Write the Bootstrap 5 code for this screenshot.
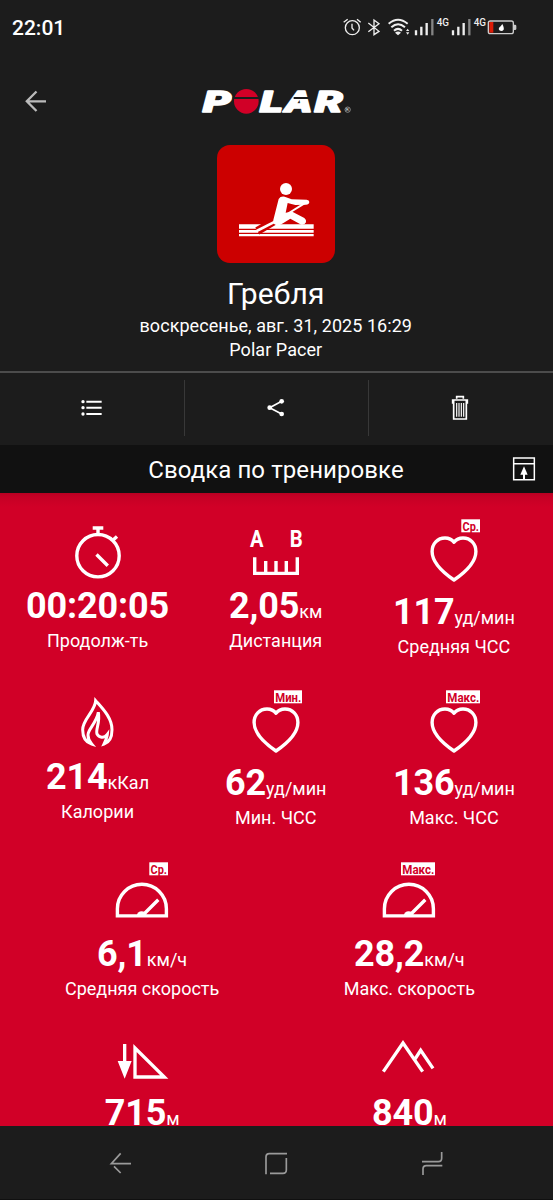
<!DOCTYPE html>
<html lang="ru">
<head>
<meta charset="utf-8">
<meta name="viewport" content="width=device-width, initial-scale=1">
<title>Polar – Гребля</title>
<link href="https://cdn.jsdelivr.net/npm/bootstrap@5.3.0/dist/css/bootstrap.min.css" rel="stylesheet">
<style>
  body { background: #1c1c1c; color: #fff; font-family: Roboto, "Noto Sans", sans-serif; }
  svg { display: block; overflow: visible; }
  .screen { width: 553px; height: 1200px; overflow: hidden; }
  .statusbar { height: 56px; padding-left: 12px; }
  .clock { font-size: 21px; font-weight: 500; line-height: 57px; }
  .appbar { height: 88.500px; }
  .side { width: 190px; padding-left: 24px; }
  .sport-tile { width: 118px; height: 118.4px; border-radius: 13px; background: #c00; }
  .sport-name { font-size: 30px; line-height: 36px; margin-top: 13.600px; letter-spacing: .1px; }
  .sport-meta { font-size: 18px; line-height: 24px; letter-spacing: .05px; position: static; }
  .sport-name + .sport-meta { margin-top: 1.500px; }
  .session { height: 228.500px; border-bottom: 2px solid #4c4c4c; padding-right: 1.500px; }
  .actions { height: 72px; padding: 7px 1px 9px 0; }
  .actions > div + div { border-left: 1px solid #383838; }
  .section-title { height: 48px; background: #111; font-size: 24px; line-height: 50px; letter-spacing: .08px; padding-right: 1px; }
  .title-icon { right: 17px; }
  .summary { height: 633px; padding: 25px 10px 0 8.500px; background: linear-gradient(#b80022, #c60025 4px, #d10027 14px, #d10027); }
  .metrics { height: 171.3px; --bs-gutter-x: 0; }
  .metric-value { font-size: 36px; line-height: 42px; height: 42px; font-weight: 700; white-space: nowrap; letter-spacing: -.15px; padding-top: .6px; }
  .unit { font-size: 18px; font-weight: 400; line-height: 1; letter-spacing: 0; }
  .metric-label { font-size: 18px; line-height: 21px; margin-top: 3.5px; }
  .line { fill: none; stroke: #fff; stroke-width: 3.4; }
  .tagtext { font: 700 13px Roboto, sans-serif; fill: #d10027; }
  .sysnav { height: 74px; border-bottom: 1px solid #101010; }
</style>
</head>
<body>
<svg width="0" height="0" class="position-absolute" aria-hidden="true">
  <defs>
    <path id="heart" class="line" d="M0 24.3C-2.5 21-5.5 20-9 20C-16.500 20-21.900 26-21.900 33.500C-21.900 45-11 54.500 0 62C11 54.500 21.900 45 21.900 33.500C21.900 26 16.500 20 9 20C5.500 20 2.500 21 0 24.300Z" stroke-linejoin="round"/>
    <g id="gauge"><path class="line" d="M-24.600 54.900V47.800A24.500 24.500 0 0 1 24.400 47.800V54.900Z M2 53L16.300 38.800"/><path fill="#fff" d="M-5.200 55a4.800 4.800 0 0 1 9.600 0z"/></g>
  </defs>
</svg>
<main class="screen d-flex flex-column">
  <header class="statusbar d-flex justify-content-between flex-shrink-0">
    <span class="clock">22:01</span>
    <svg width="223" height="60" viewBox="0 0 669 180" fill="none" stroke="#eee">
      <circle cx="67" cy="83" r="21" stroke-width="4"/><path d="M66 71V84L72 91M41 67l12-9M81 58l11 9" stroke-width="4"/>
      <path d="M115 69L147 94L132 104V60L147 71L115 95" stroke-width="4"/>
      <path d="M176 71Q204 47 233 71M184 82Q204 64 225 82M192 92Q204 81 216 92" stroke-width="6"/><path d="M195 98Q204 91 213 98L204 106Z" fill="#eee" stroke="none"/>
      <path d="M228 93l5-7 5 7zM228 97l5 7 5-7z" fill="#eee" stroke="none"/>
      <g id="bars" stroke-width="7"><path d="M258 91v15M274 80v26M290 69v37"/><path d="M307 57v49" stroke="#858585"/></g>
      <use href="#bars" x="111"/>
      <g fill="#eee" stroke="none" font-family="Roboto, sans-serif" font-weight="500" font-size="33"><text x="320" y="78" textLength="37" lengthAdjust="spacingAndGlyphs">4G</text><text x="431" y="78" textLength="37" lengthAdjust="spacingAndGlyphs">4G</text></g>
      <rect x="475" y="63" width="75" height="38" rx="6" stroke="#ccc" stroke-width="4"/><path d="M478 66h12v32h-12z" fill="#dc1c06" stroke="none"/><path d="M552 74h3q4 0 4 4v8q0 4-4 4h-3z" fill="#ccc" stroke="none"/>
      <path d="M517 72q6 12 4 17q-5 7-13 2q-5-5 4-12z" fill="#fff" stroke="none"/>
    </svg>
  </header>

  <nav class="appbar d-flex flex-shrink-0">
    <div class="side"><svg width="24" height="88" viewBox="0 0 24 88" fill="none" stroke="#bbb" stroke-width="2.300"><path d="M22 45.300H3M12.500 35.500L2.800 45.300L12.500 55"/></svg></div>
    <svg width="180" height="88" viewBox="0 -57 540 264" fill="#fff" font-family="Roboto, sans-serif" font-weight="900" font-style="italic">
      <g stroke="#fff" stroke-width="5" stroke-linejoin="round" font-size="88"><text x="39" y="110" textLength="84" lengthAdjust="spacingAndGlyphs">P</text><text x="210" y="110" textLength="68" lengthAdjust="spacingAndGlyphs">L</text><text x="286" y="110" textLength="80" lengthAdjust="spacingAndGlyphs">A</text><text x="374" y="110" textLength="84" lengthAdjust="spacingAndGlyphs">R</text></g>
      <circle cx="169" cy="79" r="37" fill="#d10027"/><path d="M128 69H209M311 69H360" stroke="#1c1c1c" stroke-width="6"/>
      <circle cx="473" cy="104" r="8" fill="none" stroke="#bbb" stroke-width="2"/><text x="468" y="109" font-size="13" font-weight="400" font-style="normal">R</text>
    </svg>
  </nav>

  <section class="session d-flex flex-column align-items-center flex-shrink-0 text-center">
    <div class="sport-tile">
      <svg width="118" height="118" viewBox="51 28 354 354" fill="#fff">
        <path d="M117 266H341V279H117ZM117 283H341V291H117ZM117 295H341V302H117Z"/>
        <path d="M223 256L172 286" stroke="#c00" stroke-width="24"/>
        <circle cx="258" cy="160" r="18"/>
        <path d="M236 190Q241 181 254 183L275 191L320 192Q328 193 328 199Q327 207 318 207L286 208L263 202L257 231L277 228L313 247Q320 252 318 260Q314 269 304 267L271 249L244 266Q236 271 226 267Q218 264 220 253Z"/>
        <path d="M317 201L257 238" stroke="#fff" stroke-width="6"/><path d="M225 258L170 286" stroke="#fff" stroke-width="8"/>
      </svg>
    </div>
    <div class="sport-name">Гребля</div>
    <div class="sport-meta">воскресенье, авг. 31, 2025 16:29</div>
    <div class="sport-meta">Polar Pacer</div>
  </section>

  <section class="actions d-flex flex-shrink-0">
    <div class="flex-fill d-flex justify-content-center w-100">
      <svg width="22" height="56" viewBox="228 30 66 168" stroke="#fff"><path d="M244 95H290M244 113H290M244 132H290" stroke-width="6"/><g stroke="none" fill="#fff"><circle cx="234" cy="95" r="5"/><circle cx="234" cy="113" r="5"/><circle cx="234" cy="132" r="5"/></g></svg>
    </div>
    <div class="flex-fill d-flex justify-content-center w-100">
      <svg width="20" height="56" viewBox="755 30 60 168" fill="#fff"><path d="M802 94L766 113L802 132" fill="none" stroke="#fff" stroke-width="5"/><circle cx="802" cy="94" r="7"/><circle cx="766" cy="113" r="7"/><circle cx="802" cy="132" r="7"/></svg>
    </div>
    <div class="flex-fill d-flex justify-content-center w-100">
      <svg width="18" height="56" viewBox="1281 30 54 168" fill="none" stroke="#fff" stroke-width="5"><path d="M1298 86V80H1318V86M1286 101V90H1330V101M1289 92V147H1327V92"/><path d="M1298 99V140M1305 99V140M1312 99V140M1319 99V140" stroke-width="3.500"/></svg>
    </div>
  </section>

  <div class="section-title position-relative flex-shrink-0 text-center">Сводка по тренировке
    <svg class="title-icon position-absolute top-0" width="24" height="48" viewBox="1450 225 72 144" fill="none" stroke="#fff" stroke-width="4.500"><path d="M1455 264H1517V329H1455ZM1455 281H1517"/><path d="M1486 328V308" stroke-width="6"/><path d="M1486 289L1497 314H1475Z" fill="#fff" stroke="none"/></svg>
  </div>

  <section class="summary flex-shrink-0 overflow-hidden text-center">
    <div class="metrics row">
      <div class="col-4">
        <svg class="mx-auto" width="80" height="66" viewBox="-40 0 80 66"><circle class="line" cx="0" cy="37.700" r="21.200"/><path class="line" d="M-5.300 10H5.300M0 10V17M14.500 22.500L19 18.500M-1.500 36.500L9.800 47.700"/></svg>
        <div class="metric-value">00:20:05</div><div class="metric-label">Продолж-ть</div>
      </div>
      <div class="col-4">
        <svg class="mx-auto" width="80" height="66" viewBox="-40 0 80 66"><path class="line" d="M-21.300 39.300V55.400H21.300V39.300M-10.300 43V55M0 43V55M10.300 43V55"/><g fill="#fff" font-family="Roboto, sans-serif" font-size="23.500" font-weight="700"><text x="-26" y="29" textLength="13.500" lengthAdjust="spacingAndGlyphs">A</text><text x="13.800" y="29" textLength="13" lengthAdjust="spacingAndGlyphs">B</text></g></svg>
        <div class="metric-value">2,05<span class="unit">км</span></div><div class="metric-label">Дистанция</div>
      </div>
      <div class="col-4">
        <svg class="mx-auto" width="80" height="72" viewBox="-40 0 80 72"><use href="#heart"/><rect x="7.300" y="1.300" width="18.700" height="13" fill="#fff"/><text class="tagtext" x="8.500" y="12.500" textLength="16.500" lengthAdjust="spacingAndGlyphs">Ср.</text></svg>
        <div class="metric-value">117<span class="unit">уд/мин</span></div><div class="metric-label">Средняя ЧСС</div>
      </div>
    </div>
    <div class="metrics row">
      <div class="col-4">
        <svg class="mx-auto" width="80" height="66" viewBox="-40 0 80 66"><path transform="scale(.33333) translate(-294 -28)" d="M275 193C255 187 248 170 248 150C248 118 285 96 287 63C309 88 336 115 336 150C336 170 330 187 312 193C317 182 321 174 322 164C312 177 297 174 291 163C286 149 301 130 295 98C290 130 263 149 264 166C264 178 269 186 275 193Z" fill="none" stroke="#fff" stroke-width="9"/></svg>
        <div class="metric-value">214<span class="unit">кКал</span></div><div class="metric-label">Калории</div>
      </div>
      <div class="col-4">
        <svg class="mx-auto" width="80" height="72" viewBox="-40 0 80 72"><use href="#heart"/><rect x="-2" y="1.300" width="28" height="13" fill="#fff"/><text class="tagtext" x="-.700" y="12.500" textLength="26" lengthAdjust="spacingAndGlyphs">Мин.</text></svg>
        <div class="metric-value">62<span class="unit">уд/мин</span></div><div class="metric-label">Мин. ЧСС</div>
      </div>
      <div class="col-4">
        <svg class="mx-auto" width="80" height="72" viewBox="-40 0 80 72"><use href="#heart"/><rect x="-8" y="1.300" width="34" height="13" fill="#fff"/><text class="tagtext" x="-6.700" y="12.500" textLength="32" lengthAdjust="spacingAndGlyphs">Макс.</text></svg>
        <div class="metric-value">136<span class="unit">уд/мин</span></div><div class="metric-label">Макс. ЧСС</div>
      </div>
    </div>
    <div class="metrics row">
      <div class="col-6">
        <svg class="mx-auto" width="80" height="72" viewBox="-40 0 80 72"><use href="#gauge"/><rect x="7.300" y="1.300" width="18.700" height="13" fill="#fff"/><text class="tagtext" x="8.500" y="12.500" textLength="16.500" lengthAdjust="spacingAndGlyphs">Ср.</text></svg>
        <div class="metric-value">6,1<span class="unit">км/ч</span></div><div class="metric-label">Средняя скорость</div>
      </div>
      <div class="col-6">
        <svg class="mx-auto" width="80" height="72" viewBox="-40 0 80 72"><use href="#gauge"/><rect x="-8" y="1.300" width="34" height="13" fill="#fff"/><text class="tagtext" x="-6.700" y="12.500" textLength="32" lengthAdjust="spacingAndGlyphs">Макс.</text></svg>
        <div class="metric-value">28,2<span class="unit">км/ч</span></div><div class="metric-label">Макс. скорость</div>
      </div>
    </div>
    <div class="metrics row">
      <div class="col-6">
        <svg class="mx-auto" width="80" height="59.500" viewBox="68 21 240 178.500"><path d="M131 57H141V108H157L136 161L115 108H131Z" fill="#fff"/><path d="M167 69V156H255Z" fill="none" stroke="#fff" stroke-width="10"/></svg>
        <div class="metric-value">715<span class="unit">м</span></div>
      </div>
      <div class="col-6">
        <svg class="mx-auto" width="80" height="59.500" viewBox="870 21 240 178.500" fill="none" stroke="#fff" stroke-width="10"><path d="M913 140L972 54L1031 140M1007 104L1025 76L1062 130"/></svg>
        <div class="metric-value">840<span class="unit">м</span></div>
      </div>
    </div>
  </section>

  <footer class="sysnav flex-shrink-0">
    <svg width="553" height="73" viewBox="-240 303 1659 219" fill="none" stroke="#9a9a9a" stroke-width="5"><path d="M153 416H94L122 385M102 424L122 444"/><path d="M558 448V396Q558 386 568 386H621M619 399V435Q619 445 609 445H570"/><path d="M1085 381V400Q1085 410 1075 410H1026M1087 422H1039Q1029 422 1029 432V450"/></svg>
  </footer>
</main>
<script src="https://cdn.jsdelivr.net/npm/bootstrap@5.3.0/dist/js/bootstrap.bundle.min.js"></script>
</body>
</html>
